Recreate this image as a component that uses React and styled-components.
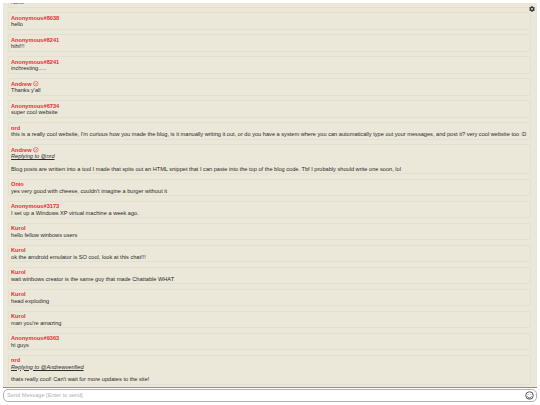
import React from 'react';
import styled, { createGlobalStyle } from 'styled-components';
import { FaCog } from 'react-icons/fa';

const GlobalStyle = createGlobalStyle`
  html, body {
    margin: 0;
    padding: 0;
    background: #fff;
    overflow: hidden;
  }
`;

const Page = styled.div`
  width: 540px;
  height: 405px;
  box-sizing: border-box;
  padding: 3px;
  display: flex;
  flex-direction: column;
  font-family: "Liberation Sans", Arial, sans-serif;
  font-size: 5.63px;
  line-height: 6.5px;
  color: #2a2a2a;
`;

const ChatPanel = styled.div`
  position: relative;
  flex: 1;
  min-height: 0;
  background: #ebe8d9;
  border-bottom: 1px solid #8f8f88;
  display: flex;
  flex-direction: column;
  justify-content: flex-end;
  overflow: hidden;
  padding: 0 6px 2.5px 5px;
  gap: 4.5px;
`;

const SettingsButton = styled.div`
  position: absolute;
  top: 2.5px;
  right: 2.5px;
  color: #333;
  display: flex;
  font-size: 6px;
`;

const Message = styled.div`
  flex: none;
  box-sizing: border-box;
  border: 1px solid #e3e0cf;
  border-radius: 1px;
  padding: 1.5px 2px 1px;
`;

const NameRow = styled.div`
  display: flex;
  align-items: center;
  gap: 1.5px;
  color: #ea2a30;
  font-weight: 700;
`;

const Reply = styled.div`
  font-style: italic;
  text-decoration: underline;
  margin-bottom: 6px;
`;

const Body = styled.div`
  white-space: nowrap;
`;

const InputBar = styled.div`
  flex: none;
  height: 13px;
  margin-top: 1px;
  box-sizing: border-box;
  background: #fff;
  border: 1px solid #b0b0b0;
  border-radius: 5px;
  display: flex;
  align-items: center;
  justify-content: space-between;
  padding: 0 2px 0 3px;
  color: #b0b0b0;
`;

const Check = () => (
  <svg width="5.5" height="5.5" viewBox="0 0 12 12" fill="none" stroke="#ea2a30" strokeWidth="1.2">
    <circle cx="6" cy="6" r="5" />
    <path d="M3.5 6.2 5.4 8 8.6 4.4" />
  </svg>
);

const Smiley = () => (
  <svg width="9" height="9" viewBox="0 0 18 18" fill="none" stroke="#444" strokeWidth="1.8">
    <circle cx="9" cy="9" r="7.5" />
    <path d="M5 11c1 2 2.500 3 4 3s3-1 4-3" />
    <path d="M6.500 6.500v1M11.500 6.500v1" />
  </svg>
);

const messages = [
  { name: 'Anonymous#1270', text: 'None' },
  { name: 'Anonymous#8038', text: 'hello' },
  { name: 'Anonymous#8241', text: 'hihi!!!' },
  { name: 'Anonymous#8241', text: 'inchresting.....' },
  { name: 'Andrew', verified: true, text: "Thanks y'all" },
  { name: 'Anonymous#6734', text: 'super cool website' },
  {
    name: 'nrd',
    text: "this is a really cool website, I'm curious how you made the blog, is it manually writing it out, or do you have a system where you can automatically type out your messages, and post it? very cool website too :D",
  },
  {
    name: 'Andrew',
    verified: true,
    reply: 'Replying to @nrd',
    text: 'Blog posts are written into a tool I made that spits out an HTML snippet that I can paste into the top of the blog code. Tbf I probably should write one soon, lol',
  },
  { name: 'Onio', text: "yes very good with cheese, couldn't imagine a burger without it" },
  { name: 'Anonymous#3173', text: 'I set up a Windows XP virtual machine a week ago.' },
  { name: 'Kurol', text: 'hello fellow winbows users' },
  { name: 'Kurol', text: 'ok the amdroid emulator is SO cool, look at this chat!!!' },
  { name: 'Kurol', text: 'wait winbows creator is the same guy that made Chattable WHAT' },
  { name: 'Kurol', text: 'head exploding' },
  { name: 'Kurol', text: "man you're amazing" },
  { name: 'Anonymous#9363', text: 'hi guys' },
  {
    name: 'nrd',
    reply: 'Replying to @Andrewverified',
    text: "thats really cool! Can't wait for more updates to the site!",
  },
];

export default function App() {
  return (
    <Page>
      <GlobalStyle />
      <ChatPanel>
        {messages.map((m, i) => (
          <Message key={i}>
            <NameRow>
              {m.name}
              {m.verified && <Check />}
            </NameRow>
            {m.reply && <Reply>{m.reply}</Reply>}
            <Body>{m.text}</Body>
          </Message>
        ))}
        <SettingsButton>
          <FaCog />
        </SettingsButton>
      </ChatPanel>
      <InputBar>
        Send Message [Enter to send]
        <Smiley />
      </InputBar>
    </Page>
  );
}
